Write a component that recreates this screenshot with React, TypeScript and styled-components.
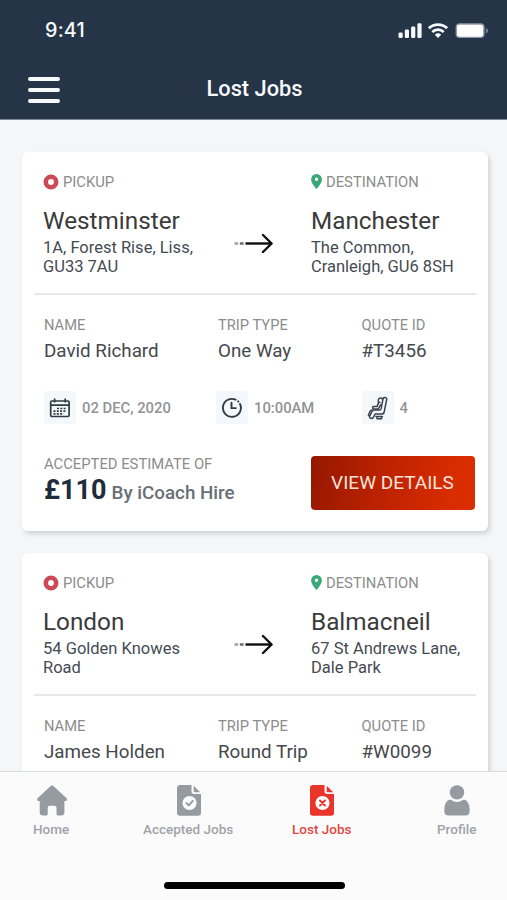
import React from "react";
import styled, { createGlobalStyle } from "styled-components";

const GlobalStyle = createGlobalStyle`
  * { box-sizing: border-box; }
  body { margin: 0; background: #f4f6f8; font-family: Roboto, "Liberation Sans", sans-serif; }
`;

const Screen = styled.div`
  width: 507px;
  height: 900px;
  display: flex;
  flex-direction: column;
  overflow: hidden;
  background: #f4f6f8;
`;

const Header = styled.header`
  height: 120px;
  flex: none;
  background: #253446;
  border-bottom: 1px solid #7d8793;
  color: #f6fafd;
`;

const StatusBar = styled.div`
  height: 60px;
  padding: 0 18px 0 45px;
  display: flex;
  align-items: center;
  justify-content: space-between;
`;

const Clock = styled.span`
  font: 500 19.8px/24px Inter, sans-serif;
  letter-spacing: 0.2px;
`;

const StatusIcons = styled.div`
  display: flex;
  align-items: center;
  gap: 6px;
  padding-top: 1px;
  svg { display: block; }
`;

const TitleBar = styled.div`
  height: 57px;
  padding: 0 28px;
  display: grid;
  grid-template-columns: 32px 1fr 32px;
  align-items: center;
`;

const MenuButton = styled.button`
  border: 0;
  padding: 0;
  margin-top: 3px;
  background: none;
  display: flex;
  flex-direction: column;
  gap: 7px;
`;

const MenuLine = styled.span`
  width: 32px;
  height: 4px;
  border-radius: 2px;
  background: #f6fafd;
`;

const Title = styled.h1`
  margin: 0;
  padding-left: 2px;
  font-weight: 500;
  font-size: 21.8px;
  line-height: 28px;
  text-align: center;
`;

const JobList = styled.main`
  flex: 1;
  min-height: 0;
  overflow: hidden;
  padding: 32px 19.5px 0 22px;
  display: flex;
  flex-direction: column;
  gap: 22px;
`;

const Card = styled.article`
  flex: none;
  height: 379px;
  padding: 0 12px;
  background: #fff;
  border-radius: 6px;
  box-shadow: 2px 3px 4px rgba(70, 80, 90, 0.2);
`;

const Route = styled.section`
  height: 143px;
  padding: 20px 0 0 9px;
  display: grid;
  grid-template-columns: 191px 77px 1fr;
  border-bottom: 2px solid #e7e8e9;
`;

const Stop = styled.div``;

const StopKind = styled.div`
  display: flex;
  align-items: center;
  gap: 4px;
  height: 20px;
  font-size: 14.8px;
  line-height: 20px;
  color: #8c8c8c;
  svg { display: block; flex: none; margin-top: -1px; }
`;

const Place = styled.h2`
  margin: 15px 0 0;
  font-weight: 400;
  font-size: 24.3px;
  line-height: 28px;
  color: #3b3b3b;
  white-space: nowrap;
`;

const Address = styled.p`
  margin: 3px 0 0;
  font-size: 16.5px;
  line-height: 19px;
  color: #454b52;
  white-space: pre;
`;

const ArrowCell = styled.div`
  padding-top: 61px;
  svg { display: block; }
`;

const Facts = styled.dl`
  margin: 0;
  padding: 20px 0 0 10px;
  display: grid;
  grid-template-columns: 174px 143.5px 1fr;
`;

const Fact = styled.div``;

const FactLabel = styled.dt`
  font-size: 14.7px;
  line-height: 20px;
  color: #8c8c8c;
`;

const FactValue = styled.dd`
  margin: 4px 0 0;
  font-size: 18.8px;
  line-height: 24px;
  color: #45484c;
`;

const Meta = styled.div`
  padding: 28px 0 0 10px;
  display: grid;
  grid-template-columns: 172px 145.5px 1fr;
`;

const MetaItem = styled.div`
  display: flex;
  align-items: center;
  gap: 6px;
  font-size: 14.8px;
  font-weight: 500;
  color: #919395;
`;

const IconTile = styled.span`
  width: 32px;
  height: 33px;
  border-radius: 3px;
  background: #f5f8fb;
  display: flex;
  align-items: center;
  justify-content: center;
`;

const Footer = styled.footer`
  padding: 30px 1px 0 10px;
  display: flex;
  justify-content: space-between;
`;

const EstimateLabel = styled.div`
  font-size: 14.8px;
  line-height: 20px;
  color: #8c8c8c;
`;

const Estimate = styled.div`
  margin-top: -1px;
  display: flex;
  align-items: baseline;
  gap: 5px;
  line-height: 34px;
`;

const Price = styled.strong`
  font-size: 27px;
  font-weight: 700;
  color: #1f2c3c;
`;

const Company = styled.span`
  font-size: 18.8px;
  color: #6a6f75;
  font-weight: 500;
`;

const DetailsButton = styled.button`
  width: 164px;
  height: 54px;
  margin-top: 2px;
  border: 0;
  border-radius: 4px;
  padding: 0;
  background: linear-gradient(100deg, #951800 0%, #b92100 40%, #d92c00 85%, #db2d00 100%);
  color: #fbe3dc;
  font: 400 19px/28px Roboto, sans-serif;
`;

const TabBar = styled.nav`
  flex: none;
  height: 129px;
  display: flex;
  flex-direction: column;
  align-items: center;
  border-top: 1.5px solid #d9dbdd;
  background: #fbfbfc;
`;

const Tabs = styled.div`
  width: 100%;
  padding: 13px 0 0 33px;
  display: grid;
  grid-template-columns: 110px 149px 145px 1fr;
  justify-items: start;
`;

const Tab = styled.a<{ $active?: boolean }>`
  display: flex;
  flex-direction: column;
  align-items: center;
  gap: 4px;
  font-size: 13.5px;
  font-weight: 500;
  line-height: 18px;
  color: ${(p) => (p.$active ? "#e0483f" : "#a0a3a7")};
  svg { display: block; margin-left: 1px; color: ${(p) => (p.$active ? "#ea3329" : "#969ba2")}; }
`;

const HomeIndicator = styled.div`
  width: 181px;
  height: 7px;
  margin: 44px 0 0 2px;
  border-radius: 4px;
  background: #000;
`;

const SignalIcon = () => (
  <svg width="24" height="16" viewBox="0 0 24 16" fill="currentColor">
    <rect x="0.5" y="9.500" width="4.200" height="5.500" rx="1.300" />
    <rect x="6.800" y="6.500" width="4.200" height="8.500" rx="1.300" />
    <rect x="13.100" y="3.500" width="4.200" height="11.500" rx="1.300" />
    <rect x="19.400" y="0.300" width="4.200" height="14.700" rx="1.300" />
  </svg>
);

const WifiIcon = () => (
  <svg width="20" height="16" viewBox="0 0 20 16" fill="none" stroke="currentColor" strokeWidth="2.800">
    <path d="M.9 5.200a13.200 13.200 0 0 1 18.200 0" />
    <path d="M4.300 8.900a8.300 8.300 0 0 1 11.400 0" />
    <path d="M10 15 6.800 11.800a4.700 4.700 0 0 1 6.400 0z" fill="currentColor" stroke="none" />
  </svg>
);

const BatteryIcon = () => (
  <svg width="35" height="16" viewBox="0 0 35 16">
    <rect x="1.600" y="0.300" width="29" height="14.800" rx="4" fill="#8f99a5" />
    <rect x="3" y="1.700" width="26.200" height="12" rx="2.600" fill="#fff" />
    <path d="M31.800 5c3 .8 3 4.600 0 5.400z" fill="#77828f" />
  </svg>
);

const PickupIcon = () => (
  <svg width="16" height="16" viewBox="0 0 16 16" fill="none">
    <circle cx="8" cy="8" r="5.200" stroke="#cc4a55" strokeWidth="4.600" />
  </svg>
);

const PinIcon = () => (
  <svg width="11" height="15" viewBox="0 0 11 15">
    <path
      fill="#3aa878"
      fillRule="evenodd"
      d="M5.500 0A5.400 5.400 0 0 0 .1 5.400C.1 9.300 5.500 15 5.500 15s5.400-5.700 5.400-9.600A5.400 5.400 0 0 0 5.500 0zm0 3.500a1.700 1.700 0 1 1 0 3.400 1.700 1.700 0 0 1 0-3.400z"
    />
  </svg>
);

const ArrowIcon = () => (
  <svg width="40" height="20" viewBox="0 0 40 20" fill="none" stroke="#0c0c0c" strokeWidth="2.400">
    <path d="M.5 10.500h3.600" stroke="#999" />
    <path d="M5.800 10.500h3.800" stroke="#666" />
    <path d="M11.500 10.500h26" />
    <path d="M29 2l8.600 8.500L29 19" strokeLinecap="round" strokeLinejoin="round" />
  </svg>
);

const CalendarIcon = () => (
  <svg width="22" height="22" viewBox="0 0 22 22" fill="none" stroke="#2f3b47" strokeWidth="1.700">
    <rect x="1.700" y="4" width="18.400" height="15.500" rx="1.200" />
    <path d="M1.700 8.200h18.400M5.600 1.500v4M16.200 1.500v4" />
    <path d="M8 11.500h9.500M4.500 14.200h13M4.500 16.900h10" strokeDasharray="2 1.300" />
  </svg>
);

const ClockIcon = () => (
  <svg width="22" height="22" viewBox="0 0 22 22" fill="none" stroke="#2f3b47" strokeWidth="1.900" strokeLinecap="round">
    <path d="M14.600 2.700A9 9 0 1 0 19 7M17.100 4.300l.3.300" />
    <path d="M10.500 5.800v5.300h4.400" />
  </svg>
);

const SeatIcon = () => (
  <svg width="22" height="24" viewBox="0 0 22 24" fill="none" stroke="#39434d" strokeWidth="1.500" strokeLinejoin="round" strokeLinecap="round">
    <path d="M16.200 2.200c.8-1.300 3.400-1 3.600.6L17.200 16c-.3 1.400-1.200 2.100-2.600 2.100H8.200L6 21.800c-1 1.200-3.800.4-3.500-1.200L5 15.300c.5-.9 1.200-1.200 2.300-1.200h5.300c.9 0 1.300-.4 1.500-1.200z" />
    <path d="M13 6.500c-1.300 0-1.900-.8-1.700-2l.2-1.200c.4-1.700 3.700-1.700 4 0" />
    <path d="M11.600 6.600 10 10.600H6.800c-1.700.2-1.600 2.100 0 2.300h4.500l2.300-4M5 14c-1.300.2-1.800.9-2.300 2L1.400 19.600M9 20.500h6.500M10 20.500v2.200h4.600v-2.200" />
  </svg>
);

const HomeIcon = () => (
  <svg width="32" height="31" viewBox="0 0 32 31" fill="currentColor">
    <path d="M14.700.9c.9-.8 1.900-.8 2.800 0L30.300 13c1.300 1.300.8 3-.9 3h-1v11.500c0 2-1.200 3-3 3H22c-1 0-1.500-.6-1.500-1.500v-6c0-1.300-.8-2.200-2-2.200h-4.800c-1.200 0-2 .9-2 2.200v6c0 .9-.5 1.500-1.500 1.500H6.700c-1.800 0-3-1-3-3V16h-1c-1.700 0-2.200-1.700-.9-3z" />
  </svg>
);

const DocumentIcon = ({ mark }: { mark: string }) => (
  <svg width="24" height="31" viewBox="0 0 24 31">
    <path fill="currentColor" d="M3 0h11.500v6.500c0 1.400 1 2.400 2.400 2.400H24V28c0 1.700-1.100 2.800-2.800 2.800H3C1.200 30.800 0 29.700 0 28V2.800C0 1.100 1.200 0 3 0z" />
    <path fill="currentColor" d="M16.700.8l6.500 6.500H18c-.9 0-1.300-.4-1.300-1.300z" />
    <circle cx="12.500" cy="18" r="7.100" fill="#fbfbfc" />
    <path d={mark} fill="none" stroke="currentColor" strokeWidth="1.900" strokeLinecap="round" strokeLinejoin="round" />
  </svg>
);

const ProfileIcon = () => (
  <svg width="26" height="31" viewBox="0 0 26 31" fill="currentColor">
    <circle cx="13" cy="7.400" r="7.200" />
    <path d="M5.800 14.700c1.300 0 2 .6 3.100 1.200 2.600 1.300 5.600 1.300 8.200 0 1.100-.6 1.800-1.200 3.100-1.200 3.300.4 5.500 4.500 5.500 11 0 3.400-1.600 4.800-4.200 4.800h-17c-2.600 0-4.200-1.400-4.200-4.800 0-6.500 2.200-10.600 5.500-11z" />
  </svg>
);

interface Job {
  from: string;
  fromAddress: string;
  to: string;
  toAddress: string;
  name: string;
  trip: string;
  quote: string;
}

const jobs: Job[] = [
  {
    from: "Westminster",
    fromAddress: "1A, Forest Rise, Liss,\nGU33 7AU",
    to: "Manchester",
    toAddress: "The Common,\nCranleigh, GU6 8SH",
    name: "David Richard",
    trip: "One Way",
    quote: "#T3456",
  },
  {
    from: "London",
    fromAddress: "54 Golden Knowes\nRoad",
    to: "Balmacneil",
    toAddress: "67 St Andrews Lane,\nDale Park",
    name: "James Holden",
    trip: "Round Trip",
    quote: "#W0099",
  },
];

const JobCard = ({ job, summary }: { job: Job; summary: boolean }) => (
  <Card>
    <Route>
      <Stop>
        <StopKind><PickupIcon />PICKUP</StopKind>
        <Place>{job.from}</Place>
        <Address>{job.fromAddress}</Address>
      </Stop>
      <ArrowCell><ArrowIcon /></ArrowCell>
      <Stop>
        <StopKind><PinIcon />DESTINATION</StopKind>
        <Place>{job.to}</Place>
        <Address>{job.toAddress}</Address>
      </Stop>
    </Route>
    <Facts>
      <Fact><FactLabel>NAME</FactLabel><FactValue>{job.name}</FactValue></Fact>
      <Fact><FactLabel>TRIP TYPE</FactLabel><FactValue>{job.trip}</FactValue></Fact>
      <Fact><FactLabel>QUOTE ID</FactLabel><FactValue>{job.quote}</FactValue></Fact>
    </Facts>
    {summary && (
      <>
        <Meta>
          <MetaItem><IconTile><CalendarIcon /></IconTile>02 DEC, 2020</MetaItem>
          <MetaItem><IconTile><ClockIcon /></IconTile>10:00AM</MetaItem>
          <MetaItem><IconTile><SeatIcon /></IconTile>4</MetaItem>
        </Meta>
        <Footer>
          <div>
            <EstimateLabel>ACCEPTED ESTIMATE OF</EstimateLabel>
            <Estimate><Price>£110</Price><Company>By iCoach Hire</Company></Estimate>
          </div>
          <DetailsButton>VIEW DETAILS</DetailsButton>
        </Footer>
      </>
    )}
  </Card>
);

export default function App() {
  return (
    <Screen>
      <GlobalStyle />
      <Header>
        <StatusBar>
          <Clock>9:41</Clock>
          <StatusIcons>
            <SignalIcon />
            <WifiIcon />
            <BatteryIcon />
          </StatusIcons>
        </StatusBar>
        <TitleBar>
          <MenuButton aria-label="Menu"><MenuLine /><MenuLine /><MenuLine /></MenuButton>
          <Title>Lost Jobs</Title>
        </TitleBar>
      </Header>
      <JobList>
        {jobs.map((job, i) => <JobCard key={job.quote} job={job} summary={i === 0} />)}
      </JobList>
      <TabBar>
        <Tabs>
          <Tab><HomeIcon />Home</Tab>
          <Tab><DocumentIcon mark="M9.500 18l2.300 2.300 4-4.500" />Accepted Jobs</Tab>
          <Tab $active><DocumentIcon mark="M10 15.500l5 5M15 15.500l-5 5" />Lost Jobs</Tab>
          <Tab><ProfileIcon />Profile</Tab>
        </Tabs>
        <HomeIndicator />
      </TabBar>
    </Screen>
  );
}
